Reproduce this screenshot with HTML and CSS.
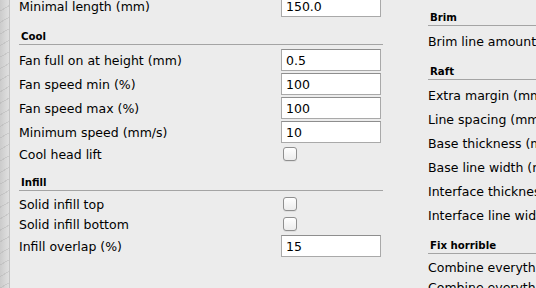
FILE: index.html
```html
<!DOCTYPE html>
<html>
<head>
<meta charset="utf-8">
<link rel="stylesheet" href="styles.css">
</head>
<body>
<div class="app">
  <div class="strip"></div>
  <div class="pane">
    <div class="col col-left">
      <div class="row"><span class="label">Minimal length (mm)</span><input class="field" type="text" value="150.0"></div>
      <div class="head">Cool</div>
      <div class="rows">
        <div class="row"><span class="label">Fan full on at height (mm)</span><input class="field" type="text" value="0.5"></div>
        <div class="row"><span class="label">Fan speed min (%)</span><input class="field" type="text" value="100"></div>
        <div class="row"><span class="label">Fan speed max (%)</span><input class="field" type="text" value="100"></div>
        <div class="row"><span class="label">Minimum speed (mm/s)</span><input class="field" type="text" value="10"></div>
        <div class="row row-check"><span class="label">Cool head lift</span><span class="check-wrap"><span class="check"></span></span></div>
      </div>
      <div class="head">Infill</div>
      <div class="rows">
        <div class="row row-check"><span class="label">Solid infill top</span><span class="check-wrap"><span class="check"></span></span></div>
        <div class="row row-check"><span class="label">Solid infill bottom</span><span class="check-wrap"><span class="check"></span></span></div>
        <div class="row"><span class="label">Infill overlap (%)</span><input class="field" type="text" value="15"></div>
      </div>
    </div>
    <div class="col col-right">
      <div class="head">Brim</div>
      <div class="rows">
        <div class="row"><span class="label">Brim line amount</span><input class="field" type="text" value="20"></div>
      </div>
      <div class="head">Raft</div>
      <div class="rows">
        <div class="row"><span class="label">Extra margin (mm)</span><input class="field" type="text" value="5.0"></div>
        <div class="row"><span class="label">Line spacing (mm)</span><input class="field" type="text" value="1.0"></div>
        <div class="row"><span class="label">Base thickness (mm)</span><input class="field" type="text" value="0.3"></div>
        <div class="row"><span class="label">Base line width (mm)</span><input class="field" type="text" value="0.7"></div>
        <div class="row"><span class="label">Interface thickness (mm)</span><input class="field" type="text" value="0.2"></div>
        <div class="row"><span class="label">Interface line width (mm)</span><input class="field" type="text" value="0.2"></div>
      </div>
      <div class="head">Fix horrible</div>
      <div class="rows">
        <div class="row row-check"><span class="label">Combine everything (Type-A)</span><span class="check-wrap"><span class="check"></span></span></div>
        <div class="row row-check"><span class="label">Combine everything (Type-B)</span><span class="check-wrap"><span class="check"></span></span></div>
      </div>
    </div>
  </div>
</div>
</body>
</html>
```

FILE: styles.css
```css
html, body {
  margin: 0;
  padding: 0;
  width: 536px;
  height: 288px;
  overflow: hidden;
  background: #ececec;
}

.app {
  display: flex;
  width: 536px;
  height: 288px;
  overflow: hidden;
  font-family: "DejaVu Sans", "Liberation Sans", sans-serif;
  font-size: 12.5px;
  color: #000;
}

.strip {
  flex: 0 0 9px;
  border-right: 1px solid #c4c4c4;
  background:
    repeating-linear-gradient(150deg, rgba(255,255,255,0) 0 9px, rgba(160,160,160,0.3) 9px 10px),
    linear-gradient(90deg, #cbcbcb, #e0e0e0);
}

.pane {
  display: flex;
  gap: 45px;
  padding-left: 9px;
  flex: 1 0 auto;
}

.col {
  flex: 0 0 364px;
  width: 364px;
  display: flex;
  flex-direction: column;
}

.col-left {
  margin-top: -6px;
}

.col-right {
  margin-top: -1px;
}

.row {
  display: flex;
  align-items: center;
  height: 24px;
}

.row-check {
  height: 20px;
}

.label {
  flex: 1 1 auto;
  white-space: nowrap;
  line-height: 15px;
}

.field {
  box-sizing: border-box;
  width: 100px;
  height: 22px;
  margin: 0 2px 0 0;
  padding: 0 4px;
  border: 1px solid #a9a9a9;
  border-top-color: #8e8e8e;
  background: #fff;
  font-family: "DejaVu Sans", "Liberation Sans", sans-serif;
  font-size: 12.5px;
  color: #000;
  outline: none;
}

.check-wrap {
  flex: 0 0 100px;
  width: 100px;
  margin-right: 2px;
  display: flex;
  align-items: center;
}

.check {
  box-sizing: border-box;
  width: 14px;
  height: 14px;
  margin-left: 2px;
  border: 1px solid #8f8f8f;
  border-radius: 3px;
  background: linear-gradient(#ffffff, #ececec);
  box-shadow: 0 1px 0 rgba(0,0,0,0.06);
}

.head {
  padding-top: 12px;
  padding-left: 2px;
  padding-bottom: 1px;
  line-height: 13px;
  font-size: 10.2px;
  font-weight: bold;
  border-bottom: 1px solid #a4a4a4;
}

.rows {
  display: flex;
  flex-direction: column;
  margin-top: 3px;
}
```
